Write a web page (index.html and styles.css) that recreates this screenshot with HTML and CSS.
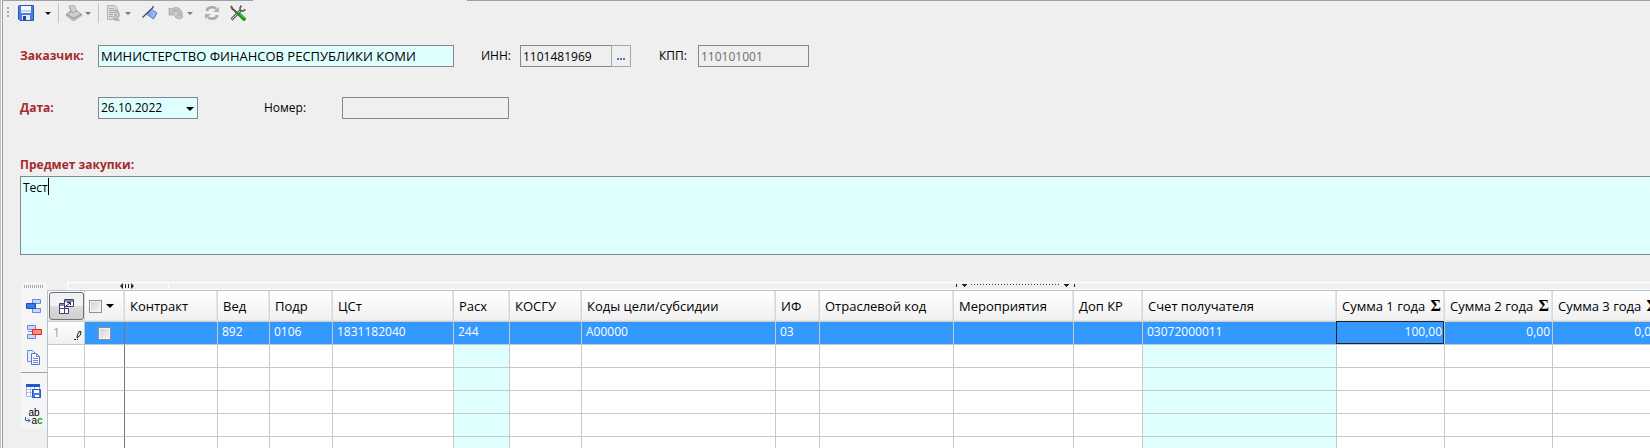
FILE: index.html
```
<!DOCTYPE html>
<html lang="ru">
<head>
<meta charset="utf-8">
<title>Заявка на закупку</title>
<link rel="stylesheet" href="styles.css">
</head>
<body>
<div class="window">
  <div class="top-edge"><span class="edge-start"></span><span class="edge-end"></span></div>
  <div class="toolbar" role="toolbar" aria-label="Панель инструментов">
    <span class="grip"></span>
    <button class="tool" aria-label="Сохранить"><svg width="16" height="16" viewBox="0 0 16 16"><path d="M1.500.5h14v15H2L.5 14V1z" fill="#4a7be0" stroke="#2a55c0"/><path d="M3 1h10v7H3z" fill="#f4f8ff"/><path d="M3 5h10v2H3z" fill="#c3d4f5"/><path d="M4 10h8v5H4z" fill="#e8ecf4"/><path d="M5 11h3v4H5z" fill="#23479c"/></svg></button>
    <button class="drop dark" aria-label="Варианты сохранения"></button>
    <span class="sep"></span>
    <button class="tool" aria-label="Обработка"><svg width="16" height="16" viewBox="0 0 16 16"><path d="M0 9l4-3 6-1 6 4v2l-8 5H7l-7-5z" fill="#a6a6a6"/><path d="M3 1l5-1 3 6 4 3-7 4-7-4 4-2z" fill="#cfcfcf" stroke="#a2a2a2" stroke-width=".7"/><path d="M3 1l3 7 5-2" fill="none" stroke="#9c9c9c" stroke-width=".8"/><path d="M1 11l7 4 7-4" fill="none" stroke="#c9c9c9"/></svg></button>
    <button class="drop" aria-label="Варианты обработки"></button>
    <span class="sep"></span>
    <button class="tool" aria-label="Документ"><svg width="16" height="16" viewBox="0 0 16 16"><path d="M1.500.5h7l3 3v11h-10z" fill="#dcdcdc" stroke="#b4b4b4"/><path d="M3 3.500h5M3 5.500h6M3 7.500h6M3 9.500h4M3 11.500h4" stroke="#aaa"/><path d="M9 4l4 2 1 5-2 2 2 3H9l-2-3 2-4z" fill="#b2b2b2"/><path d="M10 7l2 3-3 3" fill="none" stroke="#e2e2e2"/></svg></button>
    <button class="drop" aria-label="Варианты документа"></button>
    <button class="tool flag" aria-label="Отметка"><svg width="16" height="16" viewBox="0 0 16 16"><path d="M9 4l6 4-3.500 6L5 9.500z" fill="#8aa8ee" stroke="#5b7fd6"/><path d="M9.500 6l3 2-2 3.500" fill="none" stroke="#b9cdfb"/><path d="M.5 12.500L11 2.500V1" fill="none" stroke="#3c4878" stroke-width="1.300"/></svg></button>
    <button class="tool undo" aria-label="Отменить"><svg width="16" height="16" viewBox="0 0 16 16"><path d="M1 3l3 1c2-2 6-2 8 0l2 3v3l1 2-3 2-4-1-1-2 3-1-2-3-2 1 1 2H1z" fill="#c4c4c4" stroke="#a0a0a0" stroke-width=".7"/><path d="M4 6l5-1 3 3v3" fill="none" stroke="#a8a8a8"/></svg></button>
    <button class="drop" aria-label="Варианты отмены"></button>
    <button class="tool refresh" aria-label="Обновить"><svg width="16" height="16" viewBox="0 0 16 16"><path d="M3 6c0-4 7-5 9-2M13 10c0 4-7 5-9 2" fill="none" stroke="#aaa" stroke-width="2.600"/><path d="M15 2v5H9zM1 14V9h6z" fill="#b0b0b0"/></svg></button>
    <button class="tool tools" aria-label="Настройки"><svg width="16" height="16" viewBox="0 0 16 16"><path d="M1.500 14.500L11 5" stroke="#555" stroke-width="2.800"/><path d="M2 14L11 5" stroke="#ddd"/><path d="M11.500.5L10 3l.5 2.500L13 6l2.500-1.500" fill="none" stroke="#666" stroke-width="1.700"/><path d="M1 1l1.500 3L4 5l5 5" fill="none" stroke="#555" stroke-width="1.900"/><path d="M9.500 9.500l4.500 4.500" stroke="#189a18" stroke-width="3.800" stroke-linecap="round"/><path d="M10 9l4 4" stroke="#64d664" stroke-width=".8"/></svg></button>
  </div>

  <form class="form" onsubmit="return false">
    <div class="line">
      <label class="required first" for="customer">Заказчик:</label>
      <input class="field customer editable" id="customer" value="МИНИСТЕРСТВО ФИНАНСОВ РЕСПУБЛИКИ КОМИ">
      <label class="inn-label" for="inn">ИНН:</label>
      <input class="field inn" id="inn" value="1101481969">
      <button class="more" type="button" aria-label="Выбрать"><i></i><i></i><i></i></button>
      <label class="kpp-label" for="kpp">КПП:</label>
      <input class="field kpp" id="kpp" value="110101001" disabled>
    </div>
    <div class="line">
      <label class="required first" for="date">Дата:</label>
      <span class="date-box"><select class="field date editable" id="date"><option>26.10.2022</option></select></span>
      <label class="number-label" for="number">Номер:</label>
      <input class="field number" id="number">
    </div>
    <label class="required subject-label" for="subject">Предмет закупки:</label>
    <div class="subject-box">
      <textarea class="subject editable" id="subject">Тест</textarea>
      <span class="caret"></span>
    </div>
  </form>

  <section class="lines">
    <div class="side" role="toolbar" aria-label="Строки">
      <span class="side-grip"></span>
      <button class="tool" aria-label="Добавить строку"><svg width="16" height="16" viewBox="0 0 16 16"><path d="M6.500 1.500h8v4h-8zM6.500 10.500h8v4h-8z" fill="#c8d8fa" stroke="#6a8ad6"/><path d="M.5 5.500h9v5h-9z" fill="#2f7be8" stroke="#1d4fb8"/></svg></button>
      <button class="tool" aria-label="Удалить строку"><svg width="16" height="16" viewBox="0 0 16 16"><path d="M1.500 1.500h8v4h-8zM1.500 10.500h8v4h-8z" fill="#c8d8fa" stroke="#6a8ad6"/><path d="M2 7.500h4" stroke="#6a8ad6"/><path d="M6.500 5.500h9v5h-9z" fill="#ff8a80" stroke="#e0231c"/></svg></button>
      <button class="tool" aria-label="Копировать строку"><svg width="16" height="16" viewBox="0 0 16 16"><path d="M1.500.5h5l3 3v8h-8z" fill="#e6eefc" stroke="#6a8ad6"/><path d="M5.500 3.500h5l3 3v8h-8z" fill="#f4f8ff" stroke="#5578cc"/><path d="M10.500 3.500v3h3M7 8.500h5M7 10.500h5M7 12.500h5" fill="none" stroke="#6a8ad6"/></svg></button>
      <span class="side-sep"></span>
      <button class="tool" aria-label="Сохранить таблицу"><svg width="16" height="16" viewBox="0 0 16 16"><path d="M.5 1.500h13v12H.5z" fill="#fff" stroke="#9db4e6"/><path d="M0 1h14v3H0z" fill="#2458c8"/><path d="M1 6.500h12M1 9.500h12M4.500 4v9M8.500 4v9" stroke="#a9c0f0"/><path d="M6.500 6.500h8v8h-8z" fill="#4a7be0" stroke="#2a55c0"/><path d="M8 7h5v3H8zM9 12h4v2H9z" fill="#fff"/></svg></button>
      <button class="tool replace" aria-label="Заменить"><span>ab</span><span><svg width="6" height="6" viewBox="0 0 6 6"><path d="M.5 0v3.500H5M3 1.500l2 2-2 2" fill="none" stroke="#2458c8"/></svg>a<b>c</b></span></button>
    </div>
    <div class="grid">
      <div class="strip">
        <span class="band-start"><svg width="14" height="6" viewBox="0 0 14 6"><path d="M3 0v6L0 3zM11 0v6l3-3z" fill="#222"/><path d="M5.500 1v4M8.500 1v4" stroke="#222"/></svg></span>
        <span class="band-rest"><span class="range"></span></span>
      </div>
      <table>
        <colgroup><col class="c-num"><col class="c-check"><col class="c-contract"><col class="c-ved"><col class="c-podr"><col class="c-cst"><col class="c-rash"><col class="c-kosgu"><col class="c-wide"><col class="c-if"><col class="c-otr"><col class="c-mer"><col class="c-dop"><col class="c-wide"><col class="c-sum"><col class="c-sum"><col class="c-sum"></colgroup>
        <thead><tr>
          <th class="corner"><button aria-label="Настройка столбцов"><svg width="15" height="15" viewBox="0 0 15 15"><path d="M5.500.5h9v7h-9z" fill="#fff" stroke="#3d3d78"/><path d="M6 1h8v2H6z" fill="#8686b8"/><path d="M.5 4.500h5v10h-5z" fill="#fff" stroke="#3d3d78"/><path d="M1 5h4v2H1z" fill="#8686b8"/><path d="M.5 9.500h9v5h-9z" fill="#fff" stroke="#3d3d78"/><path d="M5.500 9.500v5" stroke="#3d3d78"/><path d="M7 7l4-3M8 3.500h3.500V6" fill="none" stroke="#223"/></svg></button></th>
          <th class="check"><div class="mark"><input type="checkbox" aria-label="Выбрать все"><span class="tri"></span></div></th>
          <th>Контракт</th><th>Вед</th><th>Подр</th><th>ЦСт</th><th>Расх</th><th>КОСГУ</th><th>Коды цели/субсидии</th><th>ИФ</th><th>Отраслевой код</th><th>Мероприятия</th><th>Доп КР</th><th>Счет получателя</th>
          <th><div class="sum">Сумма 1 года<b>Σ</b></div></th><th><div class="sum">Сумма 2 года<b>Σ</b></div></th><th><div class="sum">Сумма 3 года<b>Σ</b></div></th>
        </tr></thead>
        <tbody>
          <tr class="selected">
            <td class="num"><div>1<svg width="9" height="10" viewBox="0 0 9 10"><path d="M4 8l.5-3.500L6 1.500h2L7.500 5z" fill="#ddd" stroke="#222"/><path d="M1 9.500h4" stroke="#222" stroke-dasharray="2 1"/></svg></div></td>
            <td class="check"><input type="checkbox" aria-label="Выбрать строку 1"></td>
            <td></td><td>892</td><td>0106</td><td>1831182040</td><td>244</td><td></td><td>A00000</td><td>03</td><td></td><td></td><td></td><td>03072000011</td><td class="amount active">100,00</td><td class="amount">0,00</td><td class="amount">0,00</td>
          </tr>
          <tr><td></td><td class="check"></td><td></td><td></td><td></td><td></td><td class="key"></td><td></td><td></td><td></td><td></td><td></td><td></td><td class="key"></td><td></td><td></td><td></td></tr>
          <tr><td></td><td class="check"></td><td></td><td></td><td></td><td></td><td class="key"></td><td></td><td></td><td></td><td></td><td></td><td></td><td class="key"></td><td></td><td></td><td></td></tr>
          <tr><td></td><td class="check"></td><td></td><td></td><td></td><td></td><td class="key"></td><td></td><td></td><td></td><td></td><td></td><td></td><td class="key"></td><td></td><td></td><td></td></tr>
          <tr><td></td><td class="check"></td><td></td><td></td><td></td><td></td><td class="key"></td><td></td><td></td><td></td><td></td><td></td><td></td><td class="key"></td><td></td><td></td><td></td></tr>
          <tr><td></td><td class="check"></td><td></td><td></td><td></td><td></td><td class="key"></td><td></td><td></td><td></td><td></td><td></td><td></td><td class="key"></td><td></td><td></td><td></td></tr>
        </tbody>
      </table>
    </div>
  </section>
</div>
</body>
</html>
```
FILE: styles.css
```
* { box-sizing: border-box; }
body {
  margin: 0;
  background: #efefef;
  color: #000;
  font: 12px/16px "Open Sans", "Noto Sans", sans-serif;
}
button { margin: 0; padding: 0; border: 0; background: none; font: inherit; }
svg { display: block; }

.window {
  display: flex;
  flex-direction: column;
  height: 100vh;
  overflow: hidden;
  border-left: 1px solid #c4c4c4;
  box-shadow: inset 1px 0 #f7f7f7, inset 2px 0 #a0a0a0;
}
.top-edge { display: flex; gap: 214px; height: 1px; padding-left: 1px; }
.edge-start { width: 251px; background: #a0a0a0; }
.edge-end { flex: 1; background: #a0a0a0; }

/* toolbar */
.toolbar { display: flex; align-items: center; height: 24px; padding-left: 6px; }
.grip { width: 2px; height: 12px; margin-right: 9px; background: repeating-linear-gradient(#a8a8a8 0 2px, transparent 2px 4px); }
.tool { display: flex; flex: none; align-items: center; justify-content: center; width: 16px; height: 16px; }
.drop { width: 6px; height: 16px; margin-left: 3px; }
.drop::before { content: ""; display: block; width: 0; border: solid transparent; border-width: 3px 3px 0; border-top-color: #7a7a7a; }
.drop.dark { margin-left: 11px; }
.drop.dark::before { border-top-color: #111; }
.sep { width: 1px; height: 20px; margin: 0 7px; background: #c4c4c4; }
.flag { margin-left: 11px; }
.undo { margin-left: 10px; }
.refresh { margin-left: 11px; }
.tools { margin-left: 10px; }

/* form */
.form { padding: 20px 0 0 19px; }
.line { display: flex; align-items: center; height: 22px; margin-bottom: 30px; }
.required { color: #a52a2a; font-weight: bold; }
.first { width: 78px; }
.field {
  height: 22px;
  padding: 0 2px;
  border: 1px solid #828790;
  border-radius: 0;
  background: #efefef;
  color: #000;
  font: inherit;
  outline: 0;
}
.editable { background: #dfffff; }
.customer { width: 356px; font-size: 13px; }
.inn-label { width: 39px; margin-left: 27px; }
.inn { width: 91px; border-right: 0; }
.more { display: flex; gap: 1px; align-items: flex-end; justify-content: center; width: 20px; height: 22px; padding-bottom: 6px; border: 1px solid #a8a8a8; }
.more i { width: 2px; height: 2px; background: #4a7ab8; }
.kpp-label { width: 39px; margin-left: 28px; }
.kpp { width: 111px; }
.kpp:disabled { color: #6d6d6d; }
.date-box { position: relative; width: 100px; }
.date { display: block; width: 100%; appearance: none; }
.date-box::after { content: ""; position: absolute; right: 4px; top: 10px; border: solid transparent; border-width: 4px 4px 0; border-top-color: #000; }
.number-label { width: 78px; margin-left: 66px; }
.number { width: 167px; }
.subject-label { display: block; margin-top: 38px; margin-bottom: 3px; }
.subject-box { position: relative; }
.subject { display: block; width: 100%; height: 79px; padding: 3px 2px; border: 1px solid #828790; border-right: 0; color: #000; font: inherit; outline: 0; resize: none; }
.caret { position: absolute; left: 28px; top: 2px; width: 1px; height: 17px; background: #000; }

/* lines */
.lines { display: flex; flex: 1; align-items: flex-start; min-height: 0; padding: 27px 0 0 20px; }
.side { display: flex; flex: none; flex-direction: column; align-items: center; gap: 10px; width: 26px; height: 147px; background: #f5f5f5; }
.side-grip { width: 20px; height: 3px; margin-top: 3px; background: repeating-linear-gradient(90deg, #a8a8a8 0 1px, transparent 1px 2px); }
.side-sep { width: 100%; height: 1px; margin: -4px 0; background: #a0a0a0; }
.side .side-sep + .tool { margin-top: 4px; }
.replace { flex-direction: column; font: 10px/8px "Liberation Sans", sans-serif; color: #000; }
.replace span { display: flex; }
.replace b { color: #189a18; }

.grid { flex: 1; min-width: 0; overflow: hidden; }
.strip { display: flex; height: 8px; margin-left: 20px; }
.band-start { width: 102px; padding-left: 52px; border: 1px solid #fff; }
.band-rest { flex: 1; padding-left: 787px; border: 1px solid #fff; border-width: 1px 0; }
.range {
  display: block;
  width: 119px;
  height: 4px;
  margin-top: 1px;
  background:
    linear-gradient(#222, #222) 0 0 / 1px 3px no-repeat,
    linear-gradient(#222, #222) 118px 0 / 1px 3px no-repeat,
    linear-gradient(#222, #222) 6px 0 / 5px 1px no-repeat,
    linear-gradient(#222, #222) 7px 1px / 3px 1px no-repeat,
    linear-gradient(#222, #222) 8px 2px / 1px 1px no-repeat,
    linear-gradient(#222, #222) 108px 0 / 5px 1px no-repeat,
    linear-gradient(#222, #222) 109px 1px / 3px 1px no-repeat,
    linear-gradient(#222, #222) 110px 2px / 1px 1px no-repeat,
    repeating-linear-gradient(90deg, #444 0 1px, transparent 1px 3px) 15px 0 / 89px 1px no-repeat;
}

table { width: 1614px; border-collapse: separate; border-spacing: 0; table-layout: fixed; border-top: 1px solid #b4c4d2; border-left: 1px solid #b4c4d2; background: #fff; }
.c-num { width: 37px; }
.c-check { width: 40px; }
.c-contract { width: 93px; }
.c-ved { width: 52px; }
.c-podr { width: 63px; }
.c-cst { width: 121px; }
.c-rash { width: 56px; }
.c-kosgu { width: 72px; }
.c-wide { width: 194px; }
.c-if { width: 44px; }
.c-otr { width: 134px; }
.c-mer { width: 120px; }
.c-dop { width: 69px; }
.c-sum { width: 108px; }
th {
  height: 30px;
  padding: 0 0 0 5px;
  border-right: 1px solid #d3dada;
  border-bottom: 1px solid #cfcfcf;
  background: linear-gradient(#fff, #f0f0f0);
  box-shadow: inset -1px -1px #e4e4e4;
  font-weight: normal;
  font-size: 13px;
  text-align: left;
  white-space: nowrap;
}
td { height: 23px; padding: 0 3px 2px 4px; border-right: 1px solid #c8c8c8; border-bottom: 1px solid #c8c8c8; line-height: 16px; }
.key { background: #dfffff; }
td.check { border-right-color: #787878; }
.selected td { background: #3399ff; color: #fff; }
.selected td.num { padding: 0 2px 0 5px; background: linear-gradient(#fff, #f0f0f0); color: #a0a0a0; }
.num div { display: flex; align-items: center; justify-content: space-between; }
.num svg { margin-top: 4px; }
td.amount { padding-right: 2px; text-align: right; }
td.active { box-shadow: -1px -1px #222, inset -1px -1px #222; }
th.corner { padding: 1px; }
.corner button { display: flex; align-items: center; justify-content: center; width: 35px; height: 28px; border: 1px solid #707070; border-radius: 3px; background: linear-gradient(#f2f2f2 50%, #dcdcdc 50%, #d0d0d0); }
input[type="checkbox"] { display: block; appearance: none; width: 13px; height: 13px; margin: 0; border: 1px solid #8e8f8f; background: linear-gradient(135deg, #cbcfd5, #f6f6f6); box-shadow: inset 0 0 0 1px #f4f4f4; }
.mark { display: flex; align-items: center; gap: 4px; }
th.check { padding-left: 4px; }
td.check { padding: 0 0 0 13px; }
.tri { border: solid transparent; border-width: 4px 4px 0; border-top-color: #000; }
.sum { display: flex; align-items: center; justify-content: space-between; padding-right: 3px; }
.sum b { font: bold 16px/16px "Liberation Serif", serif; }
```
